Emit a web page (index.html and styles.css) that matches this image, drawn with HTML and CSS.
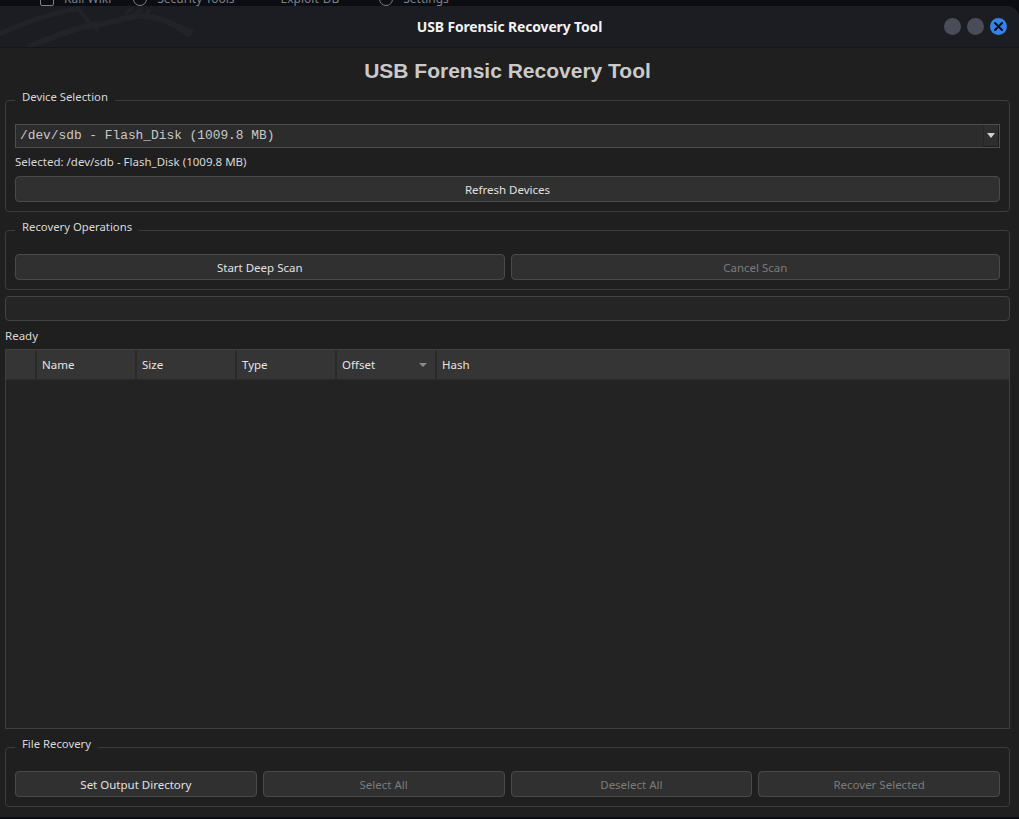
FILE: index.html
```html
<!DOCTYPE html>
<html lang="en">
<head>
<meta charset="utf-8">
<title>USB Forensic Recovery Tool</title>
<link rel="stylesheet" href="styles.css">
</head>
<body>
<div class="desk">
  <div class="desk-items">
    <span class="dk-ico"></span><span class="dk-txt">Kali Wiki</span>
    <span class="dk-ico round"></span><span class="dk-txt">Security Tools</span>
    <span class="dk-txt short">Exploit-DB</span>
    <span class="dk-ico gear"></span><span class="dk-txt">Settings</span>
  </div>
</div>
<div class="window">
  <header class="titlebar">
    <svg class="dragon" width="200" height="41" viewBox="0 0 200 41" aria-hidden="true">
      <path d="M0 28 C 25 16, 55 6, 80 2" fill="none" stroke="#212329" stroke-width="5"/>
      <path d="M28 41 C 55 30, 80 20, 100 18 C 115 17, 125 10, 140 10 C 160 10, 175 20, 193 27" fill="none" stroke="#212329" stroke-width="6"/>
      <path d="M125 8 L 132 2 M 135 8 L 142 3 M 145 9 L 150 4 M 170 18 L 190 30" fill="none" stroke="#212329" stroke-width="3"/>
      <path d="M78 2 C 85 12, 92 20, 98 24" fill="none" stroke="#212329" stroke-width="4"/>
    </svg>
    <span class="wtitle">USB Forensic Recovery Tool</span>
    <div class="wbtns">
      <span class="wb"></span>
      <span class="wb"></span>
      <span class="wb close"><svg width="9" height="9" viewBox="0 0 9 9"><path d="M1 1 L8 8 M8 1 L1 8" stroke="#111" stroke-width="2" stroke-linecap="round"/></svg></span>
    </div>
  </header>
  <main class="content">
    <h1 class="heading">USB Forensic Recovery Tool</h1>

    <fieldset class="group">
      <legend>Device Selection</legend>
      <div class="combo">
        <span class="combo-text">/dev/sdb - Flash_Disk (1009.8 MB)</span>
        <span class="combo-arrow"><span class="tri"></span></span>
      </div>
      <div class="selected">Selected: /dev/sdb - Flash_Disk (1009.8 MB)</div>
      <button class="btn full">Refresh Devices</button>
    </fieldset>

    <fieldset class="group gap7">
      <legend>Recovery Operations</legend>
      <div class="row two">
        <button class="btn">Start Deep Scan</button>
        <button class="btn disabled">Cancel Scan</button>
      </div>
    </fieldset>

    <div class="progress"></div>
    <div class="status">Ready</div>

    <div class="table">
      <div class="thead">
        <div class="th corner"></div>
        <div class="th">Name</div>
        <div class="th">Size</div>
        <div class="th">Type</div>
        <div class="th sorted">Offset<span class="sort"></span></div>
        <div class="th last">Hash</div>
      </div>
      <div class="tbody"></div>
    </div>

    <fieldset class="group gap7">
      <legend>File Recovery</legend>
      <div class="row four">
        <button class="btn">Set Output Directory</button>
        <button class="btn disabled">Select All</button>
        <button class="btn disabled">Deselect All</button>
        <button class="btn disabled">Recover Selected</button>
      </div>
    </fieldset>
  </main>
</div>
</body>
</html>
```
FILE: styles.css
```css
* { box-sizing: border-box; }

body {
  margin: 0;
  width: 1019px;
  height: 819px;
  overflow: hidden;
  background: #0b0d12;
  font-family: "Noto Sans", "DejaVu Sans", sans-serif;
}

/* desktop strip above the window */
.desk {
  height: 6px;
  overflow: hidden;
}
.desk-items {
  display: flex;
  align-items: flex-start;
  margin-top: -8px;
  padding-left: 40px;
  color: #7d8189;
  font-size: 12px;
  line-height: 14px;
}
.dk-ico {
  width: 14px;
  height: 14px;
  border: 1.5px solid #7d8189;
  border-radius: 2px;
  margin-right: 10px;
}
.dk-ico.round { border-radius: 50%; margin-left: 22px; }
.dk-ico.gear { border-radius: 50%; margin-left: 40px; }
.dk-txt.short { margin-left: 46px; }

/* window */
.window {
  height: 811px;
  display: flex;
  flex-direction: column;
  background: #1f1f1f;
  border-top-right-radius: 12px;
  overflow: hidden;
}

.titlebar {
  position: relative;
  height: 42px;
  flex: none;
  display: grid;
  grid-template-columns: 1fr auto 1fr;
  align-items: center;
  background: #1b1d23;
  border-bottom: 1px solid #15161a;
}
.dragon {
  position: absolute;
  left: 0;
  top: 0;
}
.wtitle {
  grid-column: 2;
  position: relative;
  color: #f2f2f2;
  font-weight: 700;
  font-size: 13.9px;
  letter-spacing: -0.1px;
}
.wbtns {
  grid-column: 3;
  justify-self: end;
  display: flex;
  gap: 6px;
  padding-right: 12px;
}
.wb {
  width: 17px;
  height: 17px;
  border-radius: 50%;
  background: #4a4c5a;
  display: flex;
  align-items: center;
  justify-content: center;
}
.wb.close { background: #3584e4; }

/* content */
.content {
  flex: 1;
  display: flex;
  flex-direction: column;
  padding: 11px 9px 10px 5px;
  min-height: 0;
}

.heading {
  margin: 0;
  text-align: center;
  font-family: "Liberation Sans", Arial, sans-serif;
  font-weight: 700;
  font-size: 21px;
  line-height: 24px;
  color: #cacaca;
}

.group {
  margin: 6px 0 0;
  min-width: 0;
  border: 1px solid #3c3c3c;
  border-radius: 4px;
  padding: 13px 9px 9px;
  flex: none;
}
.group.gap7 { margin-top: 7px; }
.group legend {
  padding: 0 7px 6px;
  font-size: 11.3px;
  line-height: 16px;
  color: #d8d8d8;
}

.combo {
  display: flex;
  height: 24px;
  border: 1px solid #4e4e4e;
  background: #2c2c2c;
}
.combo-text {
  flex: 1;
  padding-left: 4px;
  font-family: "Liberation Mono", "Courier New", monospace;
  font-size: 12.85px;
  line-height: 22px;
  color: #c9c9c9;
  white-space: pre;
}
.combo-arrow {
  width: 16px;
  display: flex;
  align-items: center;
  justify-content: center;
  background: #2e2e2e;
  border-left: 1px solid #262626;
  border-right: 1px solid #1c1c1c;
  border-bottom: 1px solid #1c1c1c;
}
.tri {
  width: 0;
  height: 0;
  border-left: 4px solid transparent;
  border-right: 4px solid transparent;
  border-top: 5px solid #d0d0d0;
}

.selected {
  margin-top: 6px;
  font-size: 11.5px;
  line-height: 16px;
  color: #d8d8d8;
}

.btn {
  display: block;
  height: 26px;
  margin: 0;
  padding: 0;
  border: 1px solid #4a4a4a;
  border-radius: 4px;
  background: #303030;
  color: #e0e0e0;
  font-family: "Noto Sans", "DejaVu Sans", sans-serif;
  font-size: 11.5px;
  text-align: center;
}
.btn.full { width: 100%; margin-top: 6px; }
.btn.disabled { color: #7b7b7b; }

.row { display: grid; gap: 6px; }
.row.two { grid-template-columns: 1fr 1fr; }
.row.four { grid-template-columns: repeat(4, 1fr); }

.progress {
  margin-top: 6px;
  height: 25px;
  flex: none;
  border: 1px solid #434343;
  border-radius: 4px;
  background: #252525;
}

.status {
  margin-top: 7px;
  font-size: 11.5px;
  line-height: 16px;
  color: #d8d8d8;
}

.table {
  margin-top: 5px;
  flex: 1;
  min-height: 0;
  display: flex;
  flex-direction: column;
  border: 1px solid #3f3f3f;
  background: #232323;
}
.thead {
  display: grid;
  grid-template-columns: 31px 100px 100px 100px 100px 1fr;
  height: 30px;
  flex: none;
  background: #353535;
  border-bottom: 1px solid #2b2b2b;
}
.th {
  position: relative;
  display: flex;
  align-items: center;
  padding-left: 5px;
  border-right: 2px solid #2a2a2a;
  color: #e4e4e4;
  font-size: 11.5px;
}
.th.last { border-right: none; }
.sort {
  position: absolute;
  right: 8px;
  top: 13px;
  width: 0;
  height: 0;
  border-left: 4px solid transparent;
  border-right: 4px solid transparent;
  border-top: 4px solid #8c8c8c;
}
.tbody { flex: 1; }
```
